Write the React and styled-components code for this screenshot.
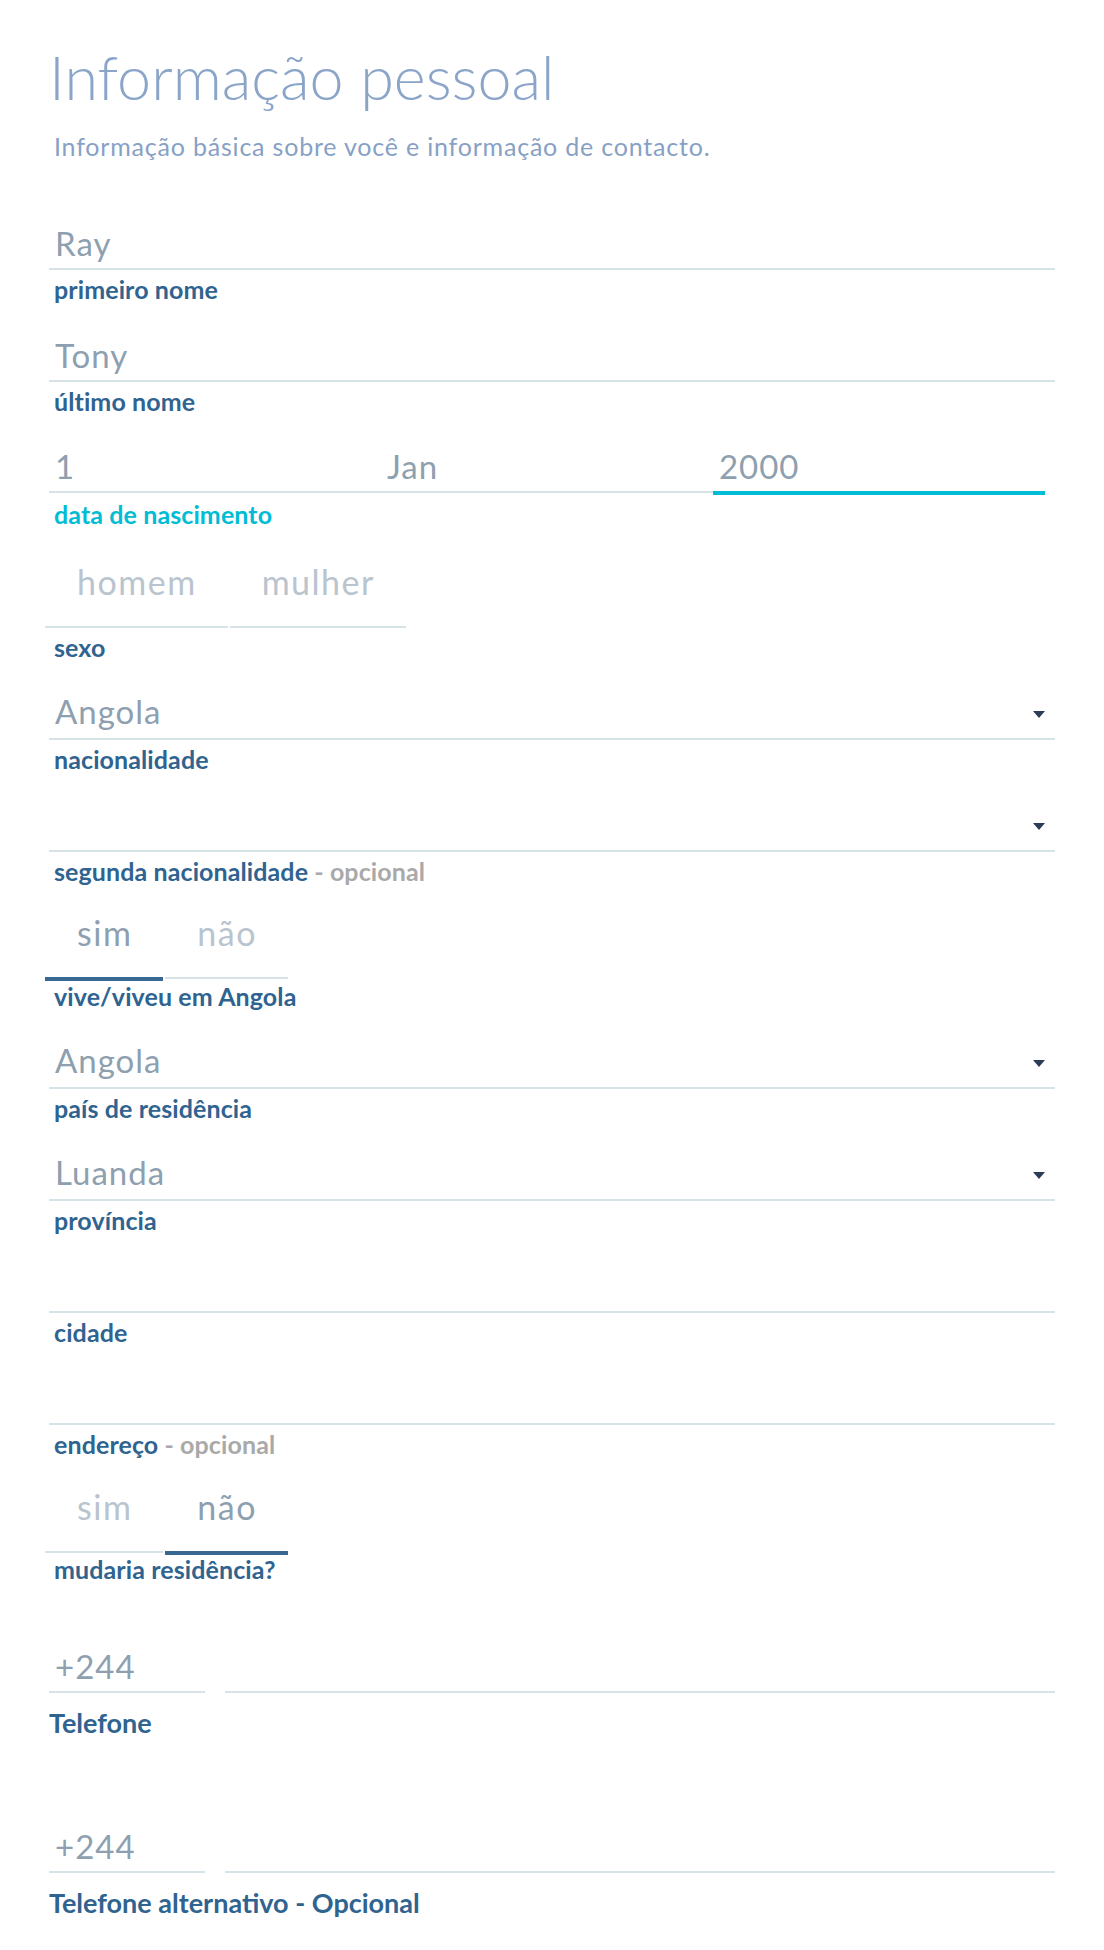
import React from 'react';
import styled, { createGlobalStyle } from 'styled-components';

const GlobalStyle = createGlobalStyle`
    * {
        box-sizing: border-box;
    }
    body {
        margin: 0;
        background: #ffffff;
        font-family: Lato, "Open Sans", sans-serif;
    }
`

const LINE = '#d7e2e6';
const LABEL = '#2f6390';
const CYAN = '#00bcd4';

const App = () => {
    return (
        <>
            <GlobalStyle />
            <Page>
                <Title>Informação pessoal</Title>
                <Subtitle>Informação básica sobre você e informação de contacto.</Subtitle>

                <Form>
                    <Field>
                        <InputBox>Ray</InputBox>
                        <Label>primeiro nome</Label>
                    </Field>

                    <Field $gap={28}>
                        <InputBox>Tony</InputBox>
                        <Label>último nome</Label>
                    </Field>

                    <Field $gap={27}>
                        <DateRow>
                            <DateCol>1</DateCol>
                            <DateCol>Jan</DateCol>
                            <DateCol $active>2000</DateCol>
                        </DateRow>
                        <Label $accent>data de nascimento</Label>
                    </Field>

                    <Field $gap={23}>
                        <ToggleGroup>
                            <ToggleButton>homem</ToggleButton>
                            <ToggleButton>mulher</ToggleButton>
                        </ToggleGroup>
                        <Label $mt={4}>sexo</Label>
                    </Field>

                    <Field $gap={28}>
                        <SelectBox>
                            <span>Angola</span>
                            <Caret />
                        </SelectBox>
                        <Label>nacionalidade</Label>
                    </Field>

                    <Field $gap={28}>
                        <SelectBox>
                            <span />
                            <Caret />
                        </SelectBox>
                        <Label>segunda nacionalidade<Optional> - opcional</Optional></Label>
                    </Field>

                    <Field $gap={17}>
                        <ToggleGroup>
                            <ToggleButton $selected>sim</ToggleButton>
                            <ToggleButton>não</ToggleButton>
                        </ToggleGroup>
                        <Label $mt={0}>vive/viveu em Angola</Label>
                    </Field>

                    <Field $gap={28}>
                        <SelectBox>
                            <span>Angola</span>
                            <Caret />
                        </SelectBox>
                        <Label>país de residência</Label>
                    </Field>

                    <Field $gap={28}>
                        <SelectBox>
                            <span>Luanda</span>
                            <Caret />
                        </SelectBox>
                        <Label>província</Label>
                    </Field>

                    <Field $gap={28}>
                        <InputBox />
                        <Label>cidade</Label>
                    </Field>

                    <Field $gap={28}>
                        <InputBox />
                        <Label>endereço<Optional> - opcional</Optional></Label>
                    </Field>

                    <Field $gap={18}>
                        <ToggleGroup>
                            <ToggleButton>sim</ToggleButton>
                            <ToggleButton $selected>não</ToggleButton>
                        </ToggleGroup>
                        <Label $mt={-1}>mudaria residência?</Label>
                    </Field>

                    <Field $gap={59}>
                        <PhoneRow>
                            <PrefixBox>+244</PrefixBox>
                            <NumberBox />
                        </PhoneRow>
                        <PhoneLabel $mt={15}>Telefone</PhoneLabel>
                    </Field>

                    <Field $gap={85}>
                        <PhoneRow>
                            <PrefixBox>+244</PrefixBox>
                            <NumberBox />
                        </PhoneRow>
                        <PhoneLabel $mt={15}>Telefone alternativo - Opcional</PhoneLabel>
                    </Field>
                </Form>
            </Page>
        </>
    )
}

const Page = styled.main`
    padding: 40px 49px 30px;
`

const Title = styled.h1`
    margin: 0;
    font-size: 61px;
    font-weight: 300;
    line-height: 74px;
    color: #8ba5c9;
`

const Subtitle = styled.p`
    margin: 18px 0 0 5px;
    font-size: 25px;
    font-weight: 400;
    line-height: 28px;
    letter-spacing: 0.8px;
    color: #87a1c5;
`

const Form = styled.div`
    display: flex;
    flex-direction: column;
    margin-top: 60px;
`

const Field = styled.div`
    margin-top: ${props => props.$gap || 0}px;
`

const InputBox = styled.div`
    display: flex;
    align-items: flex-end;
    justify-content: space-between;
    height: 50px;
    padding: 0 6px 5px;
    border-bottom: 2px solid ${LINE};
    font-size: 33px;
    font-weight: 400;
    line-height: 40px;
    letter-spacing: 1px;
    color: #8e9fb0;
`

const SelectBox = styled(InputBox)`
    padding-bottom: 7px;
`

const Caret = styled.span`
    width: 0;
    height: 0;
    margin: 0 4px 13px 0;
    border-left: 6px solid transparent;
    border-right: 6px solid transparent;
    border-top: 7px solid #2c3b57;
`

const Label = styled.div`
    margin-top: ${props => props.$mt ?? 4}px;
    padding-left: 5px;
    font-size: 25px;
    font-weight: 700;
    line-height: 30px;
    letter-spacing: 0.1px;
    color: ${props => props.$accent ? CYAN : LABEL};
`

const PhoneLabel = styled.div`
    margin-top: ${props => props.$mt}px;
    font-size: 27px;
    font-weight: 700;
    line-height: 30px;
    color: ${LABEL};
`

const Optional = styled.span`
    color: #a9a9a9;
`

const DateRow = styled.div`
    display: flex;
    align-items: flex-start;
`

const DateCol = styled.div`
    width: 33%;
    height: ${props => props.$active ? 52 : 50}px;
    display: flex;
    align-items: flex-end;
    padding: 0 6px 5px;
    border-bottom: ${props => props.$active ? `4px solid ${CYAN}` : `2px solid ${LINE}`};
    font-size: 33px;
    line-height: 40px;
    letter-spacing: 1px;
    color: #8e9fb0;
`

const ToggleGroup = styled.div`
    display: flex;
    align-items: flex-start;
    gap: 2px;
    margin-left: -4px;
`

const ToggleButton = styled.div`
    display: flex;
    align-items: flex-end;
    height: ${props => props.$selected ? 78 : 76}px;
    padding: 0 31px 24px 32px;
    border-bottom: ${props => props.$selected ? '4px solid #386791' : `2px solid ${LINE}`};
    font-size: 34px;
    line-height: 40px;
    letter-spacing: 1.5px;
    color: ${props => props.$selected ? '#8e9fb0' : '#b9c4ce'};
    cursor: pointer;
`

const PhoneRow = styled.div`
    display: flex;
    gap: 20px;
`

const PrefixBox = styled(InputBox)`
    width: 156px;
    flex: none;
`

const NumberBox = styled(InputBox)`
    flex: 1;
`

export default App;
